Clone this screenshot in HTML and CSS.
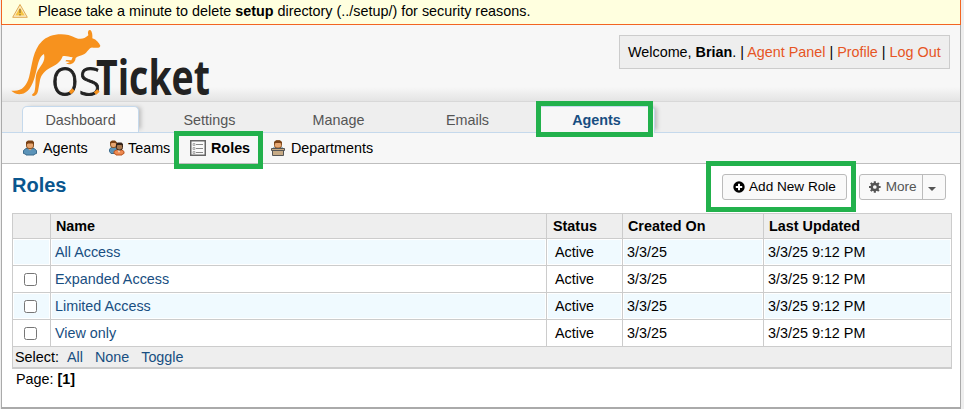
FILE: index.html
```html
<!DOCTYPE html>
<html lang="en">
<head>
<meta charset="utf-8">
<title>Roles</title>
<link rel="stylesheet" href="styles.css">
</head>
<body>
<div class="page">
  <div class="notice">
    <svg class="warn" width="16" height="16" viewBox="0 0 16 16"><path d="M8 1.500 15.300 14.300H.7Z" fill="#fdeecb" stroke="#dfa850" stroke-linejoin="round"/><path d="M8 4.500 12.800 12.600H3.200Z" fill="#f6c644"/><path d="M8 6v4M8 11v1.400" stroke="#a07c38" stroke-width="1.400"/></svg>
    <span class="notice-text">Please take a minute to delete <b>setup</b> directory (../setup/) for security reasons.</span>
  </div>
  <header class="header">
    <svg class="logo" width="202" height="76" viewBox="0 0 202 76">
      <path transform="scale(.33333)" fill="#f7921e" d="M4 197C35 201 49 184 57 157C67 119 68 76 96 49C116 27 163 20 196 38C211 44 222 43 235 31C232 20 235 14 241 15C247 20 248 31 247 40C260 44 267 54 271 62C270 71 258 68 248 68C238 66 233 82 222 88C213 93 203 94 197 99C196 109 189 118 177 118L168 116L180 111L166 109L169 105L184 106L188 97C176 96 167 91 158 94C151 113 136 122 121 128C103 138 94 149 90 165L84 199C82 209 75 214 68 213L66 209L73 202C79 180 74 161 80 144C89 123 108 112 102 87C86 93 83 125 75 153C67 184 53 205 34 207C22 209 10 203 4 197Z"/>
      <text class="logo-os" x="41" y="70" textLength="50" lengthAdjust="spacingAndGlyphs">os</text>
      <text class="logo-ticket" x="86" y="70" textLength="114" lengthAdjust="spacingAndGlyphs">Ticket</text>
      <path d="M60 68l3.500-3.500M85 68.500l3.500-3" stroke="#f7921e" stroke-width="3.500"/>
    </svg>
    <div class="welcome"><span>Welcome, <b>Brian</b>. | <a>Agent Panel</a> | <a>Profile</a> | <a>Log Out</a></span></div>
  </header>
  <nav class="tabs">
    <a class="tab raised">Dashboard</a><a class="tab">Settings</a><a class="tab">Manage</a><a class="tab">Emails</a><a class="tab raised current marked">Agents</a>
  </nav>
  <nav class="subnav">
    <a class="sub s-agents"><svg width="16" height="16" viewBox="0 0 16 16"><path d="M1.500 13.500v-3L4 8.500h8l2.500 2v3l-2 .5-.5 1H4l-.5-1Z" fill="#5b93b8" stroke="#3a6a8c"/><path d="M6 8.500h4L8 10.500Z" fill="#e7a671"/><rect x="4.500" y="1.500" width="7" height="7" rx="2.500" fill="#e7a671" stroke="#8a5526"/><path d="M4 5V2l2-1.500h4.500L12 2v3l-1.500-1.500H6Z" fill="#7a4216"/></svg><span>Agents</span></a>
    <a class="sub s-teams"><svg width="17" height="16" viewBox="0 0 17 16"><path d="M1.500 11.500v-2L3 7.500h6v6H3Z" fill="#5b93b8" stroke="#3a6a8c"/><rect x="2.500" y="1.500" width="6" height="6" rx="2.500" fill="#e7a671" stroke="#8a5526"/><path d="M2 4V2l2-1.500h3l2 2V4L7.500 3h-4Z" fill="#7a4216"/><path d="M6 13.500v-2l2-1.500h6l2 1.500v2l-1.500.5-.5 1H8l-.5-1Z" fill="#ee8950" stroke="#b9541f"/><path d="M9.500 10h3L11 13Z" fill="#f8e0cc"/><rect x="8.500" y="3.500" width="6" height="6.500" rx="2.500" fill="#a87850" stroke="#3b2415"/><path d="M8 6V4l1.500-1.500h4L15 4v2l-1.500-1h-4Z" fill="#33231a"/></svg><span>Teams</span></a>
    <a class="sub s-roles marked"><svg width="16" height="16" viewBox="0 0 16 16"><path d="M.75.75h14.500v14.500H.75Z" fill="#fafafa" stroke="#666" stroke-width="1.500"/><path d="M6 4.500h7M6 8.500h7M6 12.500h7" stroke="#888"/><path d="M3 3.500h2v2H3ZM3 7.500h2v2H3ZM3 11.500h2v2H3Z" fill="#ddd" stroke="#999" stroke-width=".7"/></svg><span>Roles</span></a>
    <a class="sub s-dept"><svg width="16" height="16" viewBox="0 0 16 16"><path d="M3 9V7.500h10V9Z" fill="#3f7da6"/><rect x="4.500" y="1" width="7" height="7" rx="2.500" fill="#e7a671" stroke="#8a5526"/><path d="M4 4V2L6 .2h4L12 2v2l-2-1H6Z" fill="#7a4216"/><path d="M1.500 8.500h13v2h-13ZM2.500 10.500h11v5h-11Z" fill="#c6aa85" stroke="#555"/></svg><span>Departments</span></a>
  </nav>
  <main class="content">
    <div class="bar">
      <h2><span>Roles</span></h2>
      <a class="btn add marked"><svg width="12" height="12" viewBox="0 0 12 12"><circle cx="6" cy="6" r="5.700"/><path d="M6 2.800v6.400M2.800 6h6.400" stroke="#fff" stroke-width="2"/></svg><span>Add New Role</span></a>
      <a class="btn more"><svg width="12" height="12" viewBox="0 0 12 12"><circle cx="6" cy="6" r="3.200" fill="none" stroke="#555" stroke-width="2.600"/><path d="M6 0v2.500M6 9.500V12M0 6h2.500M9.500 6H12M1.800 1.800l1.700 1.700M8.500 8.500l1.700 1.700M10.200 1.800 8.500 3.500M3.500 8.500l-1.700 1.700" stroke="#555" stroke-width="2.200"/></svg><span>More</span><i class="caret"></i></a>
    </div>
    <table class="list">
      <colgroup><col class="c1"><col class="c2"><col class="c3"><col class="c4"><col class="c5"></colgroup>
      <thead><tr><th></th><th>Name</th><th>Status</th><th>Created On</th><th>Last Updated</th></tr></thead>
      <tbody>
        <tr><td></td><td><a>All Access</a></td><td class="st">Active</td><td>3/3/25</td><td>3/3/25 9:12 PM</td></tr>
        <tr><td><input type="checkbox"></td><td><a>Expanded Access</a></td><td class="st">Active</td><td>3/3/25</td><td>3/3/25 9:12 PM</td></tr>
        <tr><td><input type="checkbox"></td><td><a>Limited Access</a></td><td class="st">Active</td><td>3/3/25</td><td>3/3/25 9:12 PM</td></tr>
        <tr><td><input type="checkbox"></td><td><a>View only</a></td><td class="st">Active</td><td>3/3/25</td><td>3/3/25 9:12 PM</td></tr>
      </tbody>
      <tfoot><tr><td colspan="5"><div class="select">Select:<a>All</a><a>None</a><a>Toggle</a></div></td></tr></tfoot>
    </table>
    <div class="pager">Page: <b>[1]</b></div>
  </main>
</div>
</body>
</html>
```
FILE: styles.css
```css
*, *::after { box-sizing: border-box; }
body {
  margin: 0;
  background: #eee;
  font: 14.36px/18px "Liberation Sans", Arial, sans-serif;
  color: #000;
  overflow: hidden;
}
.page {
  width: 960px;
  height: 409px;
  margin-left: 1px;
  border: solid #aaa;
  border-width: 0 1px 2px;
  background: #fff;
  display: flex;
  flex-direction: column;
}
.notice {
  height: 25px;
  margin: 0 -1px;
  padding: 0 0 3px 10px;
  background: #ffffdf;
  border: solid #f26522;
  border-width: 0 1px 1px;
  display: flex;
  align-items: center;
  gap: 10px;
}
.header {
  height: 77px;
  background: linear-gradient(#f7f7f7 0 62px, #e4e4e4 76px);
  border-bottom: 1px solid #d8d8d8;
  display: flex;
  justify-content: space-between;
  padding: 0 10px 0 8px;
}
.logo { overflow: visible; }
.logo-os { font: 300 51px "Open Sans", sans-serif; fill: #222; stroke: #222; stroke-width: .9; }
.logo-ticket { font: 700 48px "Open Sans", sans-serif; fill: #222; }
.welcome {
  margin-top: 10px;
  width: 331px;
  height: 34px;
  border: 1px solid #ccc;
  background: #eee;
  padding: 7px 8px;
  white-space: nowrap;
}
.welcome a { color: #e65524; }
.tabs {
  height: 31px;
  background: #eee;
  border-bottom: 1px solid #c5d9ec;
  display: flex;
  gap: 12px;
  padding: 4px 0 0 20px;
}
.tab {
  position: relative;
  width: 117px;
  height: 26px;
  padding-top: 5px;
  text-align: center;
  color: #555;
}
.raised {
  background: #fbfbfb;
  border: 1px solid #c5d9ec;
  border-bottom: 0;
  border-radius: 5px 5px 0 0;
  box-shadow: 4px -1px 4px -2px #bbb;
  padding-top: 4px;
}
.current {
  height: 27px;
  background: #f7f7f7;
  color: #184e81;
  font-weight: bold;
}
.marked { position: relative; }
.marked::after {
  content: "";
  position: absolute;
  border: 5px solid #22b14c;
  z-index: 2;
}
.current::after { left: -3px; top: -6px; width: 117px; height: 36px; }
.subnav {
  height: 31px;
  background: #f7f7f7;
  border-bottom: 1px solid #bebebe;
  display: flex;
  align-items: center;
  padding-left: 20px;
}
.sub { display: flex; align-items: center; gap: 5px; height: 18px; }
.s-agents { width: 86px; }
.s-teams { width: 82px; gap: 3px; }
.s-roles { width: 80px; font-weight: bold; }
.s-roles::after { left: -16px; top: -8px; width: 89px; height: 38px; }
.content { padding: 10px 0 0 10px; }
.bar { display: flex; height: 39px; }
h2 { margin: -1px 0 0; flex: 1; font-size: 20px; line-height: 24px; color: #0a568e; }
.btn {
  height: 26px;
  border: 1px solid #bbb;
  border-radius: 3px;
  background: #f9f9f9;
  display: flex;
  align-items: center;
  font-size: 13.6px;
  white-space: nowrap;
}
.add { width: 125px; padding-left: 10px; gap: 4px; margin-right: 12px; }
.add::after { left: -17px; top: -14px; width: 150px; height: 51px; }
.more { width: 87px; margin-right: 14px; padding-left: 9px; gap: 5px; color: #555; }
.caret { width: 24px; height: 24px; border-left: 1px solid #bbb; display: flex; align-items: center; justify-content: center; padding-right: 4px; }
.more span { flex: 1; }
.caret::before { content: ""; margin-top: 4px; border: solid transparent; border-width: 4px 4px 0; border-top-color: #555; }
.btn span { line-height: 18px; margin-top: -1px; }
.list {
  width: 940px;
  table-layout: fixed;
  border-collapse: separate;
  border-spacing: 0;
  border: solid #ccc;
  border-width: 1px 0 0 1px;
}
.c1 { width: 38px; }
.c2 { width: 496px; }
.c3 { width: 76px; }
.c4 { width: 141px; }
.c5 { width: 188px; }
th, td { padding: 0 4px; border: solid #ccc; border-width: 0 1px 1px 0; text-align: left; }
th { height: 25px; padding: 0 5px; background: #eee; }
tbody td { height: 27px; }
tbody tr:nth-child(odd) td { background: #f0faff; box-shadow: inset 0 0 0 1px #fff; }
th:nth-child(3) { padding-left: 6px; }
td.st { padding-left: 8px; }
td a { color: #184e81; }
input { display: block; margin: 1px 0 0 7px; width: 13px; height: 13px; }
tfoot td { height: 22px; padding: 0 2px; background: #eee; border-bottom-width: 2px; }
.select { display: flex; }
.select a { margin-left: 8px; }
.select a + a { margin-left: 12px; }
.pager { padding: 1px 4px; }
```
